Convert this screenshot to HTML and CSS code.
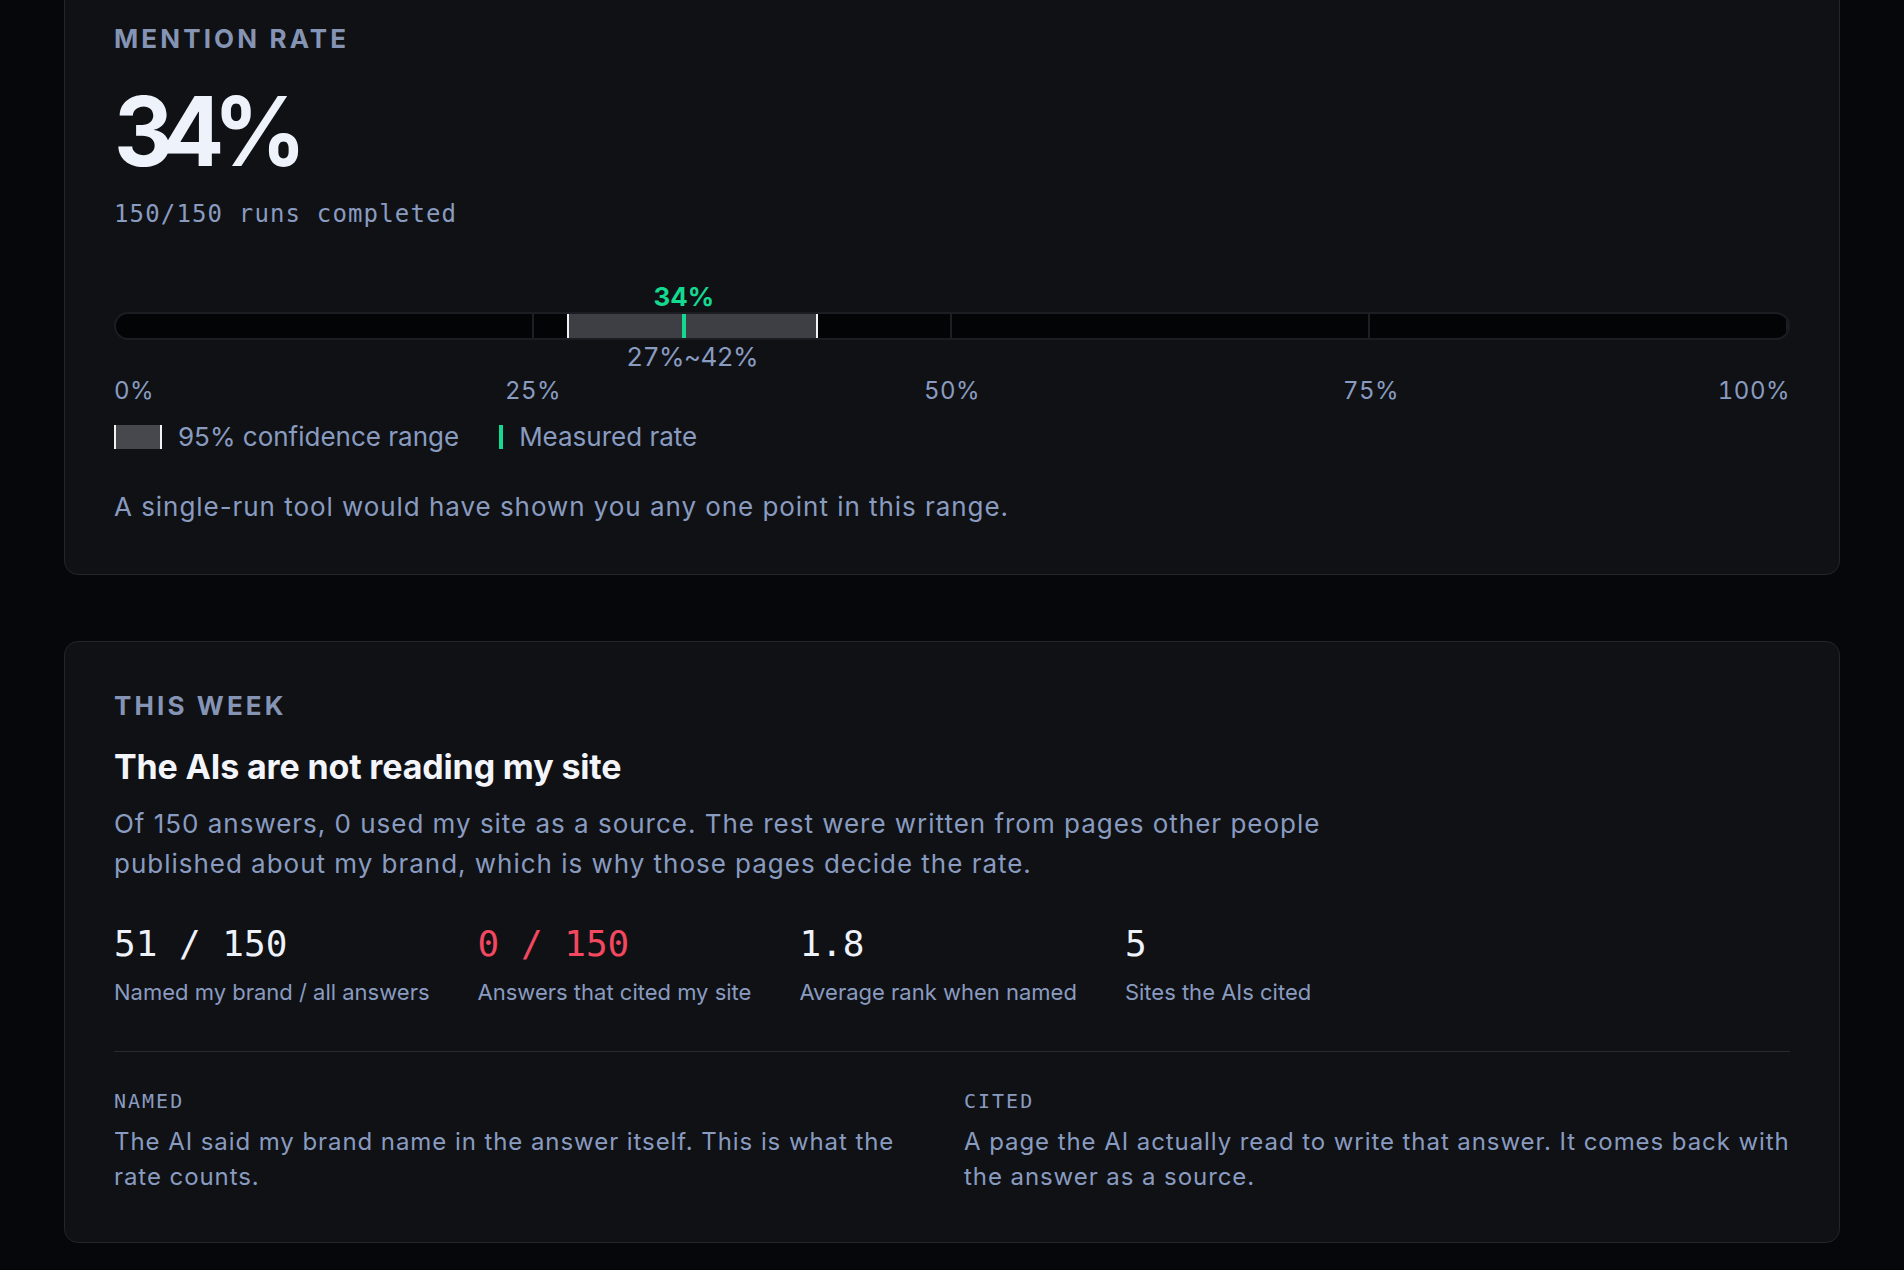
FILE: index.html
```html
<!DOCTYPE html>
<html lang="en">
<head>
<meta charset="utf-8">
<title>Mention rate</title>
<link rel="stylesheet" href="styles.css">
</head>
<body>
<main class="page">
  <section class="card card-rate">
    <div class="eyebrow">MENTION RATE</div>
    <div class="rate">34%</div>
    <div class="runs">150/150 runs completed</div>

    <div class="meter">
      <div class="meter-head">
        <span class="marker-label" style="left:34%">34%</span>
      </div>
      <div class="bar">
        <div class="bar-seg"></div>
        <div class="bar-seg"></div>
        <div class="bar-seg"></div>
        <div class="bar-seg"></div>
        <div class="range" style="left:27%;width:15%"></div>
        <div class="marker" style="left:34%"></div>
      </div>
      <div class="range-row">
        <span class="range-label" style="left:34.5%">27%~42%</span>
      </div>
      <div class="ticks">
        <span class="tick tick-start" style="left:0%">0%</span>
        <span class="tick" style="left:25%">25%</span>
        <span class="tick" style="left:50%">50%</span>
        <span class="tick" style="left:75%">75%</span>
        <span class="tick tick-end" style="left:100%">100%</span>
      </div>
    </div>

    <div class="legend">
      <span class="legend-item"><span class="swatch-range"></span>95% confidence range</span>
      <span class="legend-item"><span class="swatch-marker"></span>Measured rate</span>
    </div>

    <p class="note">A single-run tool would have shown you any one point in this range.</p>
  </section>

  <section class="card card-week">
    <div class="eyebrow">THIS WEEK</div>
    <h2 class="title">The AIs are not reading my site</h2>
    <p class="lede">Of 150 answers, 0 used my site as a source. The rest were written from pages other people published about my brand, which is why those pages decide the rate.</p>

    <div class="stats">
      <div class="stat">
        <div class="stat-value">51 / 150</div>
        <div class="stat-label">Named my brand / all answers</div>
      </div>
      <div class="stat">
        <div class="stat-value stat-bad">0 / 150</div>
        <div class="stat-label">Answers that cited my site</div>
      </div>
      <div class="stat">
        <div class="stat-value">1.8</div>
        <div class="stat-label">Average rank when named</div>
      </div>
      <div class="stat">
        <div class="stat-value">5</div>
        <div class="stat-label">Sites the AIs cited</div>
      </div>
    </div>

    <div class="divider"></div>

    <div class="defs">
      <div class="def">
        <div class="def-term">NAMED</div>
        <div class="def-text">The AI said my brand name in the answer itself. This is what the rate counts.</div>
      </div>
      <div class="def">
        <div class="def-term">CITED</div>
        <div class="def-text">A page the AI actually read to write that answer. It comes back with the answer as a source.</div>
      </div>
    </div>
  </section>
</main>
</body>
</html>
```

FILE: styles.css
```css
* {
  box-sizing: border-box;
}

html, body {
  margin: 0;
  padding: 0;
  background: #06070a;
}

body {
  min-height: 100vh;
  font-family: Inter, "Noto Sans", "Liberation Sans", sans-serif;
  color: #8a9bc0;
  overflow: hidden;
}

.page {
  padding: 0 64px;
  display: flex;
  flex-direction: column;
  gap: 66px;
}

.card {
  background: #0f1115;
  border: 1px solid #23252b;
  border-radius: 14px;
  padding: 48px 49px 51px;
}

/* the view is scrolled a little: the first card's top edge is above the fold */
.card-rate {
  margin-top: -26px;
}

.card-week {
  padding-bottom: 48px;
}

.eyebrow {
  font-weight: 700;
  font-size: 26px;
  line-height: 32px;
  letter-spacing: 0.12em;
  color: #8594b4;
}

.rate {
  margin-top: 28px;
  font-weight: 700;
  font-size: 96px;
  line-height: 96px;
  letter-spacing: -0.12em;
  color: #eef2fb;
  transform: scaleX(0.955);
  transform-origin: left center;
}

.runs {
  margin-top: 19px;
  font-family: "DejaVu Sans Mono", "Liberation Mono", monospace;
  font-size: 24px;
  line-height: 32px;
  letter-spacing: 1.15px;
  color: #8a9bc0;
}

/* meter */
.meter {
  margin-top: 52px;
}

.meter-head {
  position: relative;
  height: 30px;
}

.marker-label {
  position: absolute;
  top: 0;
  transform: translateX(-50%);
  font-weight: 700;
  font-size: 26px;
  line-height: 30px;
  color: #14d990;
  white-space: nowrap;
}

.bar {
  position: relative;
  height: 28px;
  display: grid;
  grid-template-columns: repeat(4, 1fr);
  background: #030406;
  border: 2px solid #1b1d22;
  border-radius: 14px;
  overflow: hidden;
}

.bar-seg {
  border-right: 2px solid #1d1f24;
}

.bar-seg:last-of-type {
  border-right: none;
}

.range {
  position: absolute;
  top: 0;
  bottom: 0;
  background: #3e3f45;
  border-left: 2px solid #f2f2f2;
  border-right: 2px solid #f2f2f2;
}

.marker {
  position: absolute;
  top: 0;
  bottom: 0;
  width: 4px;
  transform: translateX(-50%);
  background: #14d990;
}

.range-row {
  position: relative;
  height: 37px;
}

.range-label {
  position: absolute;
  top: 2px;
  transform: translateX(-50%);
  font-size: 26px;
  line-height: 30px;
  letter-spacing: -0.02em;
  font-variant-numeric: tabular-nums;
  color: #8a9bc0;
  white-space: nowrap;
}

.ticks {
  position: relative;
  height: 28px;
}

.tick {
  position: absolute;
  top: 0;
  transform: translateX(-50%);
  font-size: 24px;
  line-height: 28px;
  letter-spacing: 0.02em;
  font-variant-numeric: tabular-nums;
  color: #8a9bc0;
  white-space: nowrap;
}

.tick-start {
  transform: none;
}

.tick-end {
  transform: translateX(-100%);
}

/* legend */
.legend {
  margin-top: 16px;
  height: 32px;
  display: flex;
  align-items: center;
  gap: 40px;
}

.legend-item {
  display: flex;
  align-items: center;
  gap: 16px;
  font-size: 26px;
  line-height: 32px;
  color: #8a9bc0;
}

.swatch-range {
  width: 48px;
  height: 24px;
  background: #47484d;
  border-left: 2px solid #f2f2f2;
  border-right: 2px solid #f2f2f2;
}

.swatch-marker {
  width: 4px;
  height: 24px;
  background: #14d990;
}

.note {
  margin: 38px 0 0;
  font-size: 26px;
  line-height: 32px;
  letter-spacing: 0.95px;
  color: #8a9bc0;
}

/* this week */
.title {
  margin: 24px 0 0;
  font-weight: 700;
  font-size: 34px;
  line-height: 42px;
  letter-spacing: -0.15px;
  color: #f3f5fb;
}

.lede {
  margin: 16px 0 0;
  max-width: 1250px;
  font-size: 26px;
  line-height: 40px;
  letter-spacing: 0.98px;
  color: #8a9bc0;
}

.stats {
  margin-top: 38px;
  display: flex;
  gap: 48px;
}

.stat {
  display: flex;
  flex-direction: column;
  gap: 12px;
}

.stat-value {
  font-family: "DejaVu Sans Mono", "Liberation Mono", monospace;
  font-size: 36px;
  line-height: 44px;
  color: #eef2fb;
}

.stat-bad {
  color: #f3485f;
}

.stat-label {
  font-size: 22px;
  line-height: 28px;
  color: #8a9bc0;
}

.divider {
  margin-top: 45px;
  height: 1px;
  background: #292b31;
}

.defs {
  margin-top: 37px;
  display: grid;
  grid-template-columns: 1fr 1fr;
  gap: 24px;
}

.def {
  display: flex;
  flex-direction: column;
  gap: 11px;
}

.def-term {
  font-family: "DejaVu Sans Mono", "Liberation Mono", monospace;
  font-size: 20px;
  line-height: 24px;
  letter-spacing: 2px;
  color: #8a9bc0;
}

.def-text {
  font-size: 24px;
  line-height: 35px;
  letter-spacing: 0.93px;
  color: #8a9bc0;
}
```
